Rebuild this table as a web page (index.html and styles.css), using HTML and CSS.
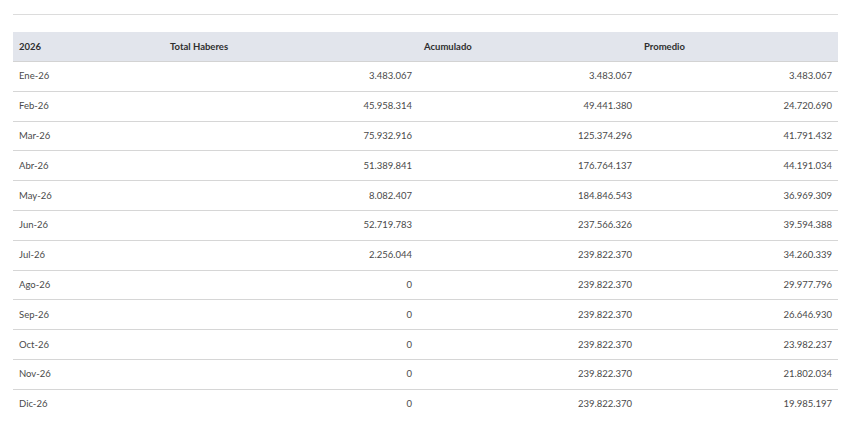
FILE: index.html
```html
<!DOCTYPE html>
<html lang="es">
<head>
<meta charset="utf-8">
<link rel="stylesheet" href="styles.css">
</head>
<body>
<div class="page">
  <div class="rule"></div>
  <table class="data">
    <thead>
      <tr>
        <th class="c1">2026</th>
        <th class="c2">Total Haberes</th>
        <th class="c3">Acumulado</th>
        <th class="c4">Promedio</th>
      </tr>
    </thead>
    <tbody>
      <tr><td>Ene-26</td><td class="num">3.483.067</td><td class="num">3.483.067</td><td class="num">3.483.067</td></tr>
      <tr><td>Feb-26</td><td class="num">45.958.314</td><td class="num">49.441.380</td><td class="num">24.720.690</td></tr>
      <tr><td>Mar-26</td><td class="num">75.932.916</td><td class="num">125.374.296</td><td class="num">41.791.432</td></tr>
      <tr><td>Abr-26</td><td class="num">51.389.841</td><td class="num">176.764.137</td><td class="num">44.191.034</td></tr>
      <tr><td>May-26</td><td class="num">8.082.407</td><td class="num">184.846.543</td><td class="num">36.969.309</td></tr>
      <tr><td>Jun-26</td><td class="num">52.719.783</td><td class="num">237.566.326</td><td class="num">39.594.388</td></tr>
      <tr><td>Jul-26</td><td class="num">2.256.044</td><td class="num">239.822.370</td><td class="num">34.260.339</td></tr>
      <tr><td>Ago-26</td><td class="num">0</td><td class="num">239.822.370</td><td class="num">29.977.796</td></tr>
      <tr><td>Sep-26</td><td class="num">0</td><td class="num">239.822.370</td><td class="num">26.646.930</td></tr>
      <tr><td>Oct-26</td><td class="num">0</td><td class="num">239.822.370</td><td class="num">23.982.237</td></tr>
      <tr><td>Nov-26</td><td class="num">0</td><td class="num">239.822.370</td><td class="num">21.802.034</td></tr>
      <tr class="last"><td>Dic-26</td><td class="num">0</td><td class="num">239.822.370</td><td class="num">19.985.197</td></tr>
    </tbody>
  </table>
</div>
</body>
</html>
```

FILE: styles.css
```css
html, body {
  margin: 0;
  padding: 0;
  background: #ffffff;
}
body {
  font-family: Lato, "Noto Sans", "Liberation Sans", sans-serif;
  font-size: 9.5px;
  color: #4a4a4a;
}
.page {
  padding: 14px 9px 0 13px;
}
.rule {
  height: 1px;
  background: #dcdcdc;
  margin-bottom: 17px;
}
.data {
  width: 825px;
  border-collapse: collapse;
  table-layout: fixed;
}
.data th {
  background: #e2e5ec;
  color: #2f2f2f;
  font-weight: 700;
  text-align: left;
  height: 29.5px;
  padding: 0 6px;
  border-bottom: 1px solid #d3d3d3;
  box-sizing: border-box;
}
.data th.c1 { width: 151px; }
.data th.c2 { width: 254px; }
.data th.c3 { width: 220px; }
.data th.c4 { width: 200px; }
.data tbody tr {
  height: 29.8px;
}
.data td {
  padding: 0 6px;
  line-height: 12px;
  border-bottom: 1px solid #d6d6d6;
  white-space: nowrap;
}
.data tr.last td {
  border-bottom: none;
}
.data td.num {
  text-align: right;
}
```
